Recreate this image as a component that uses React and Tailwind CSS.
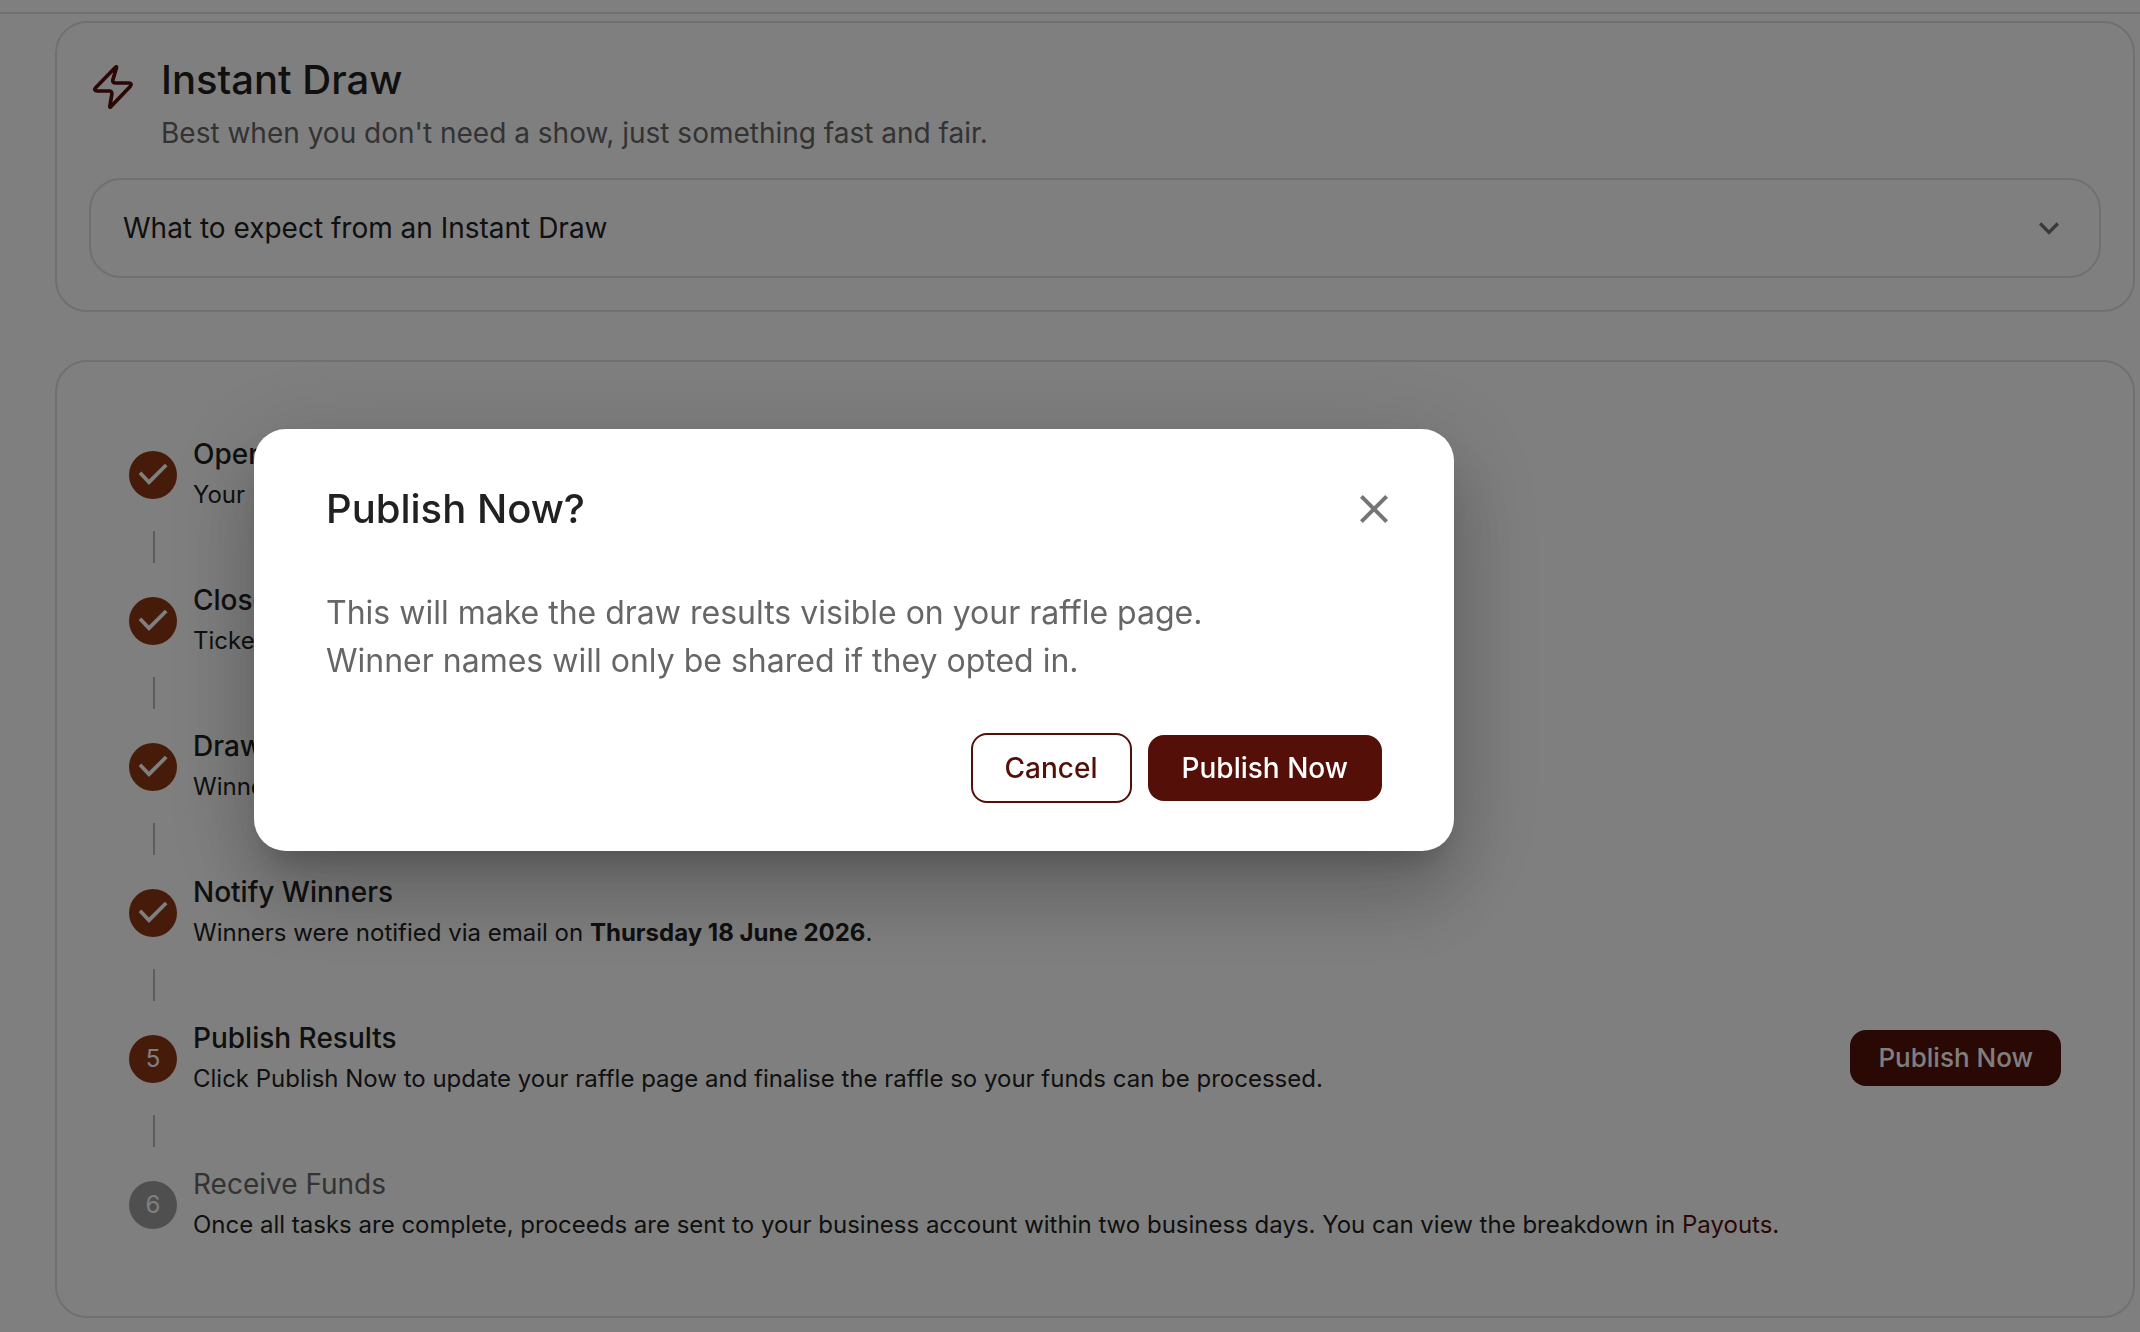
import React from "react";
import { MdClose, MdKeyboardArrowDown } from "react-icons/md";

const steps = [
  { title: "Open", done: true, body: "Your" },
  { title: "Close", done: true, body: "Tickets" },
  { title: "Draw", done: true, body: "Winners" },
  {
    title: "Notify Winners",
    done: true,
    body: (
      <>
        Winners were notified via email on <strong className="font-bold">Thursday 18 June 2026</strong>.
      </>
    ),
  },
  {
    title: "Publish Results",
    body: "Click Publish Now to update your raffle page and finalise the raffle so your funds can be processed.",
    action: "Publish Now",
  },
  {
    title: "Receive Funds",
    pending: true,
    body: (
      <>
        Once all tasks are complete, proceeds are sent to your business account within two business days. You can view
        the breakdown in{" "}
        <a href="#payouts" className="text-[#541008]">
          Payouts
        </a>
        .
      </>
    ),
  },
];

function BoltIcon() {
  return (
    <svg
      viewBox="0 0 48 48"
      className="mt-2 size-12 shrink-0"
      fill="none"
      stroke="#541008"
      strokeWidth="3.700"
      strokeLinecap="round"
      strokeLinejoin="round"
      aria-hidden="true"
    >
      <path d="M26.500 4.200L6.600 24.800C5.100 26.400 6 28 8 28H20C22 28 23.200 29 22.900 31L20.800 43.200C20.600 44.300 21.300 44.300 22 43.600L41.400 23.200C42.900 21.600 42 20 40 20H26.500C24.500 20 23.500 19 23.800 17L27.500 4.600C27.700 3.700 27.200 3.500 26.500 4.200Z" />
    </svg>
  );
}

function StepMarker({ step, number }) {
  return (
    <span
      className={
        step.pending
          ? "mt-[18px] flex size-12 shrink-0 items-center justify-center rounded-full bg-[#9e9e9e] text-2xl text-white"
          : "mt-[18px] flex size-12 shrink-0 items-center justify-center rounded-full bg-[#8f3714] text-2xl text-white"
      }
    >
      {step.done ? (
        <svg viewBox="0 0 48 48" className="size-12" fill="none" stroke="currentColor" strokeWidth="3.800" aria-label="Done">
          <path d="M11 21.800l9 9.400 17.200-17.200" />
        </svg>
      ) : (
        number
      )}
    </span>
  );
}

function Step({ step, number }) {
  return (
    <li>
      {number > 1 && <div className="my-4 ml-6 h-8 w-0.5 bg-[#bdbdbd]" />}
      <div className="flex items-start gap-4">
        <StepMarker step={step} number={number} />
        <div className="min-w-0 flex-1">
          <h3
            className={
              step.pending
                ? "text-[28px] leading-[42px] text-[#666666]"
                : "text-[28px] leading-[42px] font-medium text-[#212121]"
            }
          >
            {step.title}
          </h3>
          <p className="text-2xl leading-10 text-[#212121]">{step.body}</p>
        </div>
        {step.action && (
          <button
            type="button"
            className="self-center rounded-2xl bg-[#541008] px-7 py-2 text-[26px] leading-10 font-medium text-white"
          >
            {step.action}
          </button>
        )}
      </div>
    </li>
  );
}

function PublishDialog() {
  return (
    <div className="fixed inset-0 bg-black/50 pt-[429px] pl-[254px]">
      <div
        role="dialog"
        aria-modal="true"
        aria-labelledby="publish-title"
        className="w-full max-w-[1200px] rounded-[32px] bg-white px-[72px] py-12 shadow-[0_22px_30px_-14px_rgba(0,0,0,0.2),0_48px_76px_6px_rgba(0,0,0,0.14),0_18px_92px_16px_rgba(0,0,0,0.12)]"
      >
        <div className="-mr-4 flex items-center justify-between">
          <h2 id="publish-title" className="text-[40px] leading-[64px] font-medium text-[#212121]">
            Publish Now?
          </h2>
          <button type="button" aria-label="Close" className="text-[#757575]">
            <MdClose className="size-12" />
          </button>
        </div>
        <p className="mt-12 text-[32px] leading-[48px] text-[#666666]">
          This will make the draw results visible on your raffle page.
          <br />
          Winner names will only be shared if they opted in.
        </p>
        <div className="mt-12 flex items-center justify-end gap-4 text-[28px] leading-[50px] font-medium">
          <button type="button" className="rounded-2xl border-2 border-[#541008] px-8 py-2 text-[#541008]">
            Cancel
          </button>
          <button type="button" className="rounded-2xl bg-[#541008] px-[34px] py-2 text-white">
            Publish Now
          </button>
        </div>
      </div>
    </div>
  );
}

export default function App() {
  return (
    <div className="min-h-screen bg-white font-['Inter',sans-serif] text-[#212121] [font-optical-sizing:none]">
      <header className="h-[14px] border-b-2 border-[#e0e0e0]" />
      <main className="mt-[7px] mr-[5px] ml-[55px] flex flex-col gap-12">
        <section className="rounded-[32px] border-2 border-[#e0e0e0] p-8">
          <div className="flex items-start gap-6">
            <BoltIcon />
            <div>
              <h2 className="text-[40px] leading-[50px] font-medium">Instant Draw</h2>
              <p className="text-[28px] leading-[56px] text-[#666666]">
                Best when you don't need a show, just something fast and fair.
              </p>
            </div>
          </div>
          <button
            type="button"
            aria-expanded="false"
            className="mt-[17px] flex w-full items-center justify-between rounded-[32px] border-2 border-[#e0e0e0] py-6 pr-[30px] pl-8 text-left text-[28px] leading-[48px]"
          >
            What to expect from an Instant Draw
            <MdKeyboardArrowDown className="size-10 text-[#757575]" />
          </button>
        </section>
        <section className="rounded-[32px] border-2 border-[#e0e0e0] px-[72px] py-[71px]">
          <ol>
            {steps.map((step, i) => (
              <Step key={step.title} step={step} number={i + 1} />
            ))}
          </ol>
        </section>
      </main>
      <PublishDialog />
    </div>
  );
}
